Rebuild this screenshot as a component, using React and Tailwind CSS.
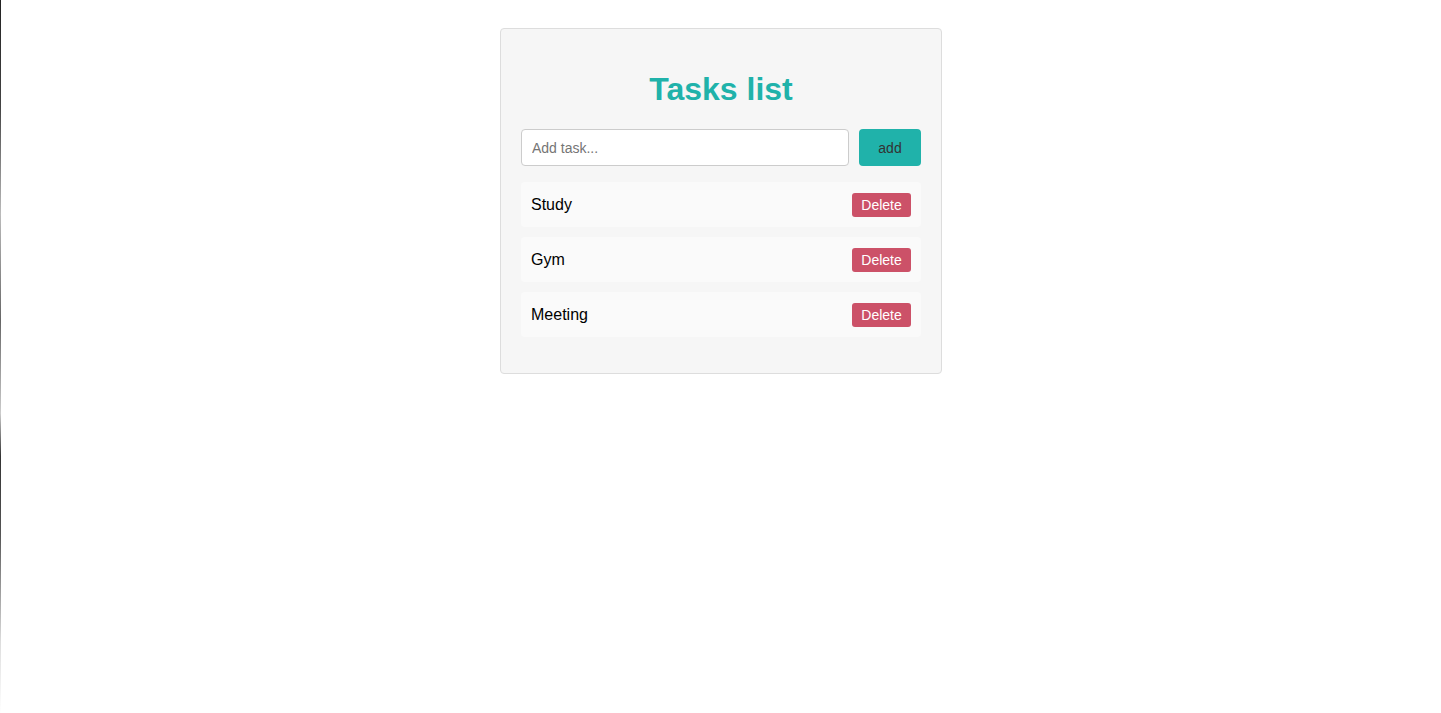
import { useState } from "react";

export default function App() {
  const [tasks, setTasks] = useState(["Study", "Gym", "Meeting"]);
  const [input, setInput] = useState("");

  const addTask = () => {
    if (!input.trim()) return;
    setTasks([...tasks, input.trim()]);
    setInput("");
  };

  return (
    <div className="flex min-h-[713px] bg-white font-['Liberation_Sans',Arial,sans-serif]">
      <div className="w-px shrink-0 bg-[linear-gradient(to_bottom,#222_0%,#444_15%,#bbb_30%,#666_45%,#ccc_58%,#333_64%,#555_75%,#ddd_90%,#fff_100%)]" />
      <div className="flex-1">
        <div className="mx-auto mt-[28px] w-[442px] rounded border border-[#dddddd] bg-[#f6f6f6] p-5">
          <h1 className="mt-[22px] mb-[21px] text-center text-[32px] font-bold leading-[37px] text-[#20b2aa]">
            Tasks list
          </h1>
          <div className="flex gap-[10px]">
            <input
              value={input}
              onChange={(e) => setInput(e.target.value)}
              placeholder="Add task..."
              className="h-[37px] flex-1 rounded border border-[#cccccc] bg-white px-[10px] text-sm text-[#333] placeholder:text-[#757575] focus:outline-none"
            />
            <button
              type="button"
              onClick={addTask}
              className="h-[37px] w-[62px] rounded bg-[#20b2aa] text-sm text-[#333]"
            >
              add
            </button>
          </div>
          <ul className="my-4 flex flex-col gap-[10px]">
            {tasks.map((task, i) => (
              <li
                key={i}
                className="flex h-[45px] items-center justify-between rounded bg-[#fafafa] px-[10px] text-base text-black"
              >
                <span>{task}</span>
                <button
                  type="button"
                  onClick={() => setTasks(tasks.filter((_, j) => j !== i))}
                  className="h-6 w-[59px] rounded-[3px] bg-[#cc5168] text-sm leading-6 text-white"
                >
                  Delete
                </button>
              </li>
            ))}
          </ul>
        </div>
      </div>
    </div>
  );
}
